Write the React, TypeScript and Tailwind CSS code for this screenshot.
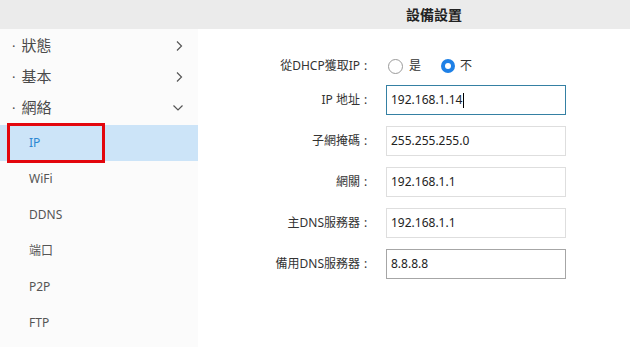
import { ReactNode } from "react";

const FONT = { fontFamily: '"Noto Sans", "Noto Sans CJK TC", sans-serif' };

type Field = { label: string; value: string; border: string; caret?: boolean };

const FIELDS: Field[] = [
  { label: "IP 地址", value: "192.168.1.14", border: "border-[#3580a3]", caret: true },
  { label: "子網掩碼", value: "255.255.255.0", border: "border-[#dedede]" },
  { label: "網關", value: "192.168.1.1", border: "border-[#dedede]" },
  { label: "主DNS服務器", value: "192.168.1.1", border: "border-[#dedede]" },
  { label: "備用DNS服務器", value: "8.8.8.8", border: "border-[#a6a6a6]" },
];

const SUBS = ["WiFi", "DDNS", "端口", "P2P", "FTP"];

function ChevronRight() {
  return (
    <svg width="10" height="12" viewBox="0 0 10 12" fill="none">
      <path d="M3 1.5 7.5 6 3 10.5" stroke="#555" strokeWidth="1.2" />
    </svg>
  );
}

function ChevronDown() {
  return (
    <svg width="12" height="8" viewBox="0 0 12 8" fill="none">
      <path d="M1.5 1.5 6 6 10.5 1.5" stroke="#555" strokeWidth="1.2" />
    </svg>
  );
}

function TopItem({ label, icon }: { label: string; icon: ReactNode }) {
  return (
    <div className="flex h-[31px] items-center justify-between pl-[12px] pr-[14px] text-[15px] text-[#4a4a4a]">
      <span>
        <span className="mr-[6px] text-[13px]">·</span>
        {label}
      </span>
      {icon}
    </div>
  );
}

function Label({ children }: { children: ReactNode }) {
  return (
    <div className="flex w-[130px] justify-end">
      <span>{children}</span>
      <span className="ml-[4px] w-[8px]">:</span>
    </div>
  );
}

export default function App() {
  return (
    <div className="flex h-[347px] w-[630px] flex-col bg-white" style={FONT}>
      <header className="flex h-[29px] shrink-0 items-center bg-[#ebebeb] pl-[406px] text-[14px] font-bold text-[#222]">
        設備設置
      </header>

      <div className="flex flex-1">
        <aside className="w-[198px] shrink-0 bg-[#fbfbfb] pt-[1px]">
          <TopItem label="狀態" icon={<ChevronRight />} />
          <TopItem label="基本" icon={<ChevronRight />} />
          <TopItem label="網絡" icon={<ChevronDown />} />

          <div className="relative mt-[2px] flex h-[36px] items-center bg-[#cce4f8] pl-[29px] text-[12px] text-[#2b87d3]">
            IP
            <div className="absolute left-[7px] top-[-2px] h-[40px] w-[98px] border-[3px] border-[#e3060d]" />
          </div>
          {SUBS.map((s) => (
            <div key={s} className="flex h-[36px] items-center pl-[29px] text-[12px] text-[#555]">
              {s}
            </div>
          ))}
        </aside>

        <main className="flex-1 pl-[44px] pt-[22px] text-[12px] text-[#333]">
          <div className="mb-[4px] flex h-[30px] items-center">
            <Label>從DHCP獲取IP</Label>
            <div className="ml-[16px] flex items-center">
              <span className="h-[15px] w-[15px] rounded-full border border-[#9a9a9a] bg-white" />
              <span className="ml-[6px]">是</span>
              <span className="ml-[20px] flex h-[14px] w-[14px] items-center justify-center rounded-full bg-[#1e80e6]">
                <span className="h-[6px] w-[6px] rounded-full bg-white" />
              </span>
              <span className="ml-[5px]">不</span>
            </div>
          </div>

          <div className="flex flex-col gap-[11px]">
            {FIELDS.map((f) => (
              <div key={f.label} className="flex h-[30px] items-center">
                <Label>{f.label}</Label>
                <div
                  className={`ml-[14px] flex h-[30px] w-[180px] items-center border bg-white pl-[4px] text-[12px] text-[#222] ${f.border}`}
                >
                  {f.value}
                  {f.caret ? <span className="ml-[1px] h-[15px] w-px bg-black" /> : null}
                </div>
              </div>
            ))}
          </div>
        </main>
      </div>
    </div>
  );
}
